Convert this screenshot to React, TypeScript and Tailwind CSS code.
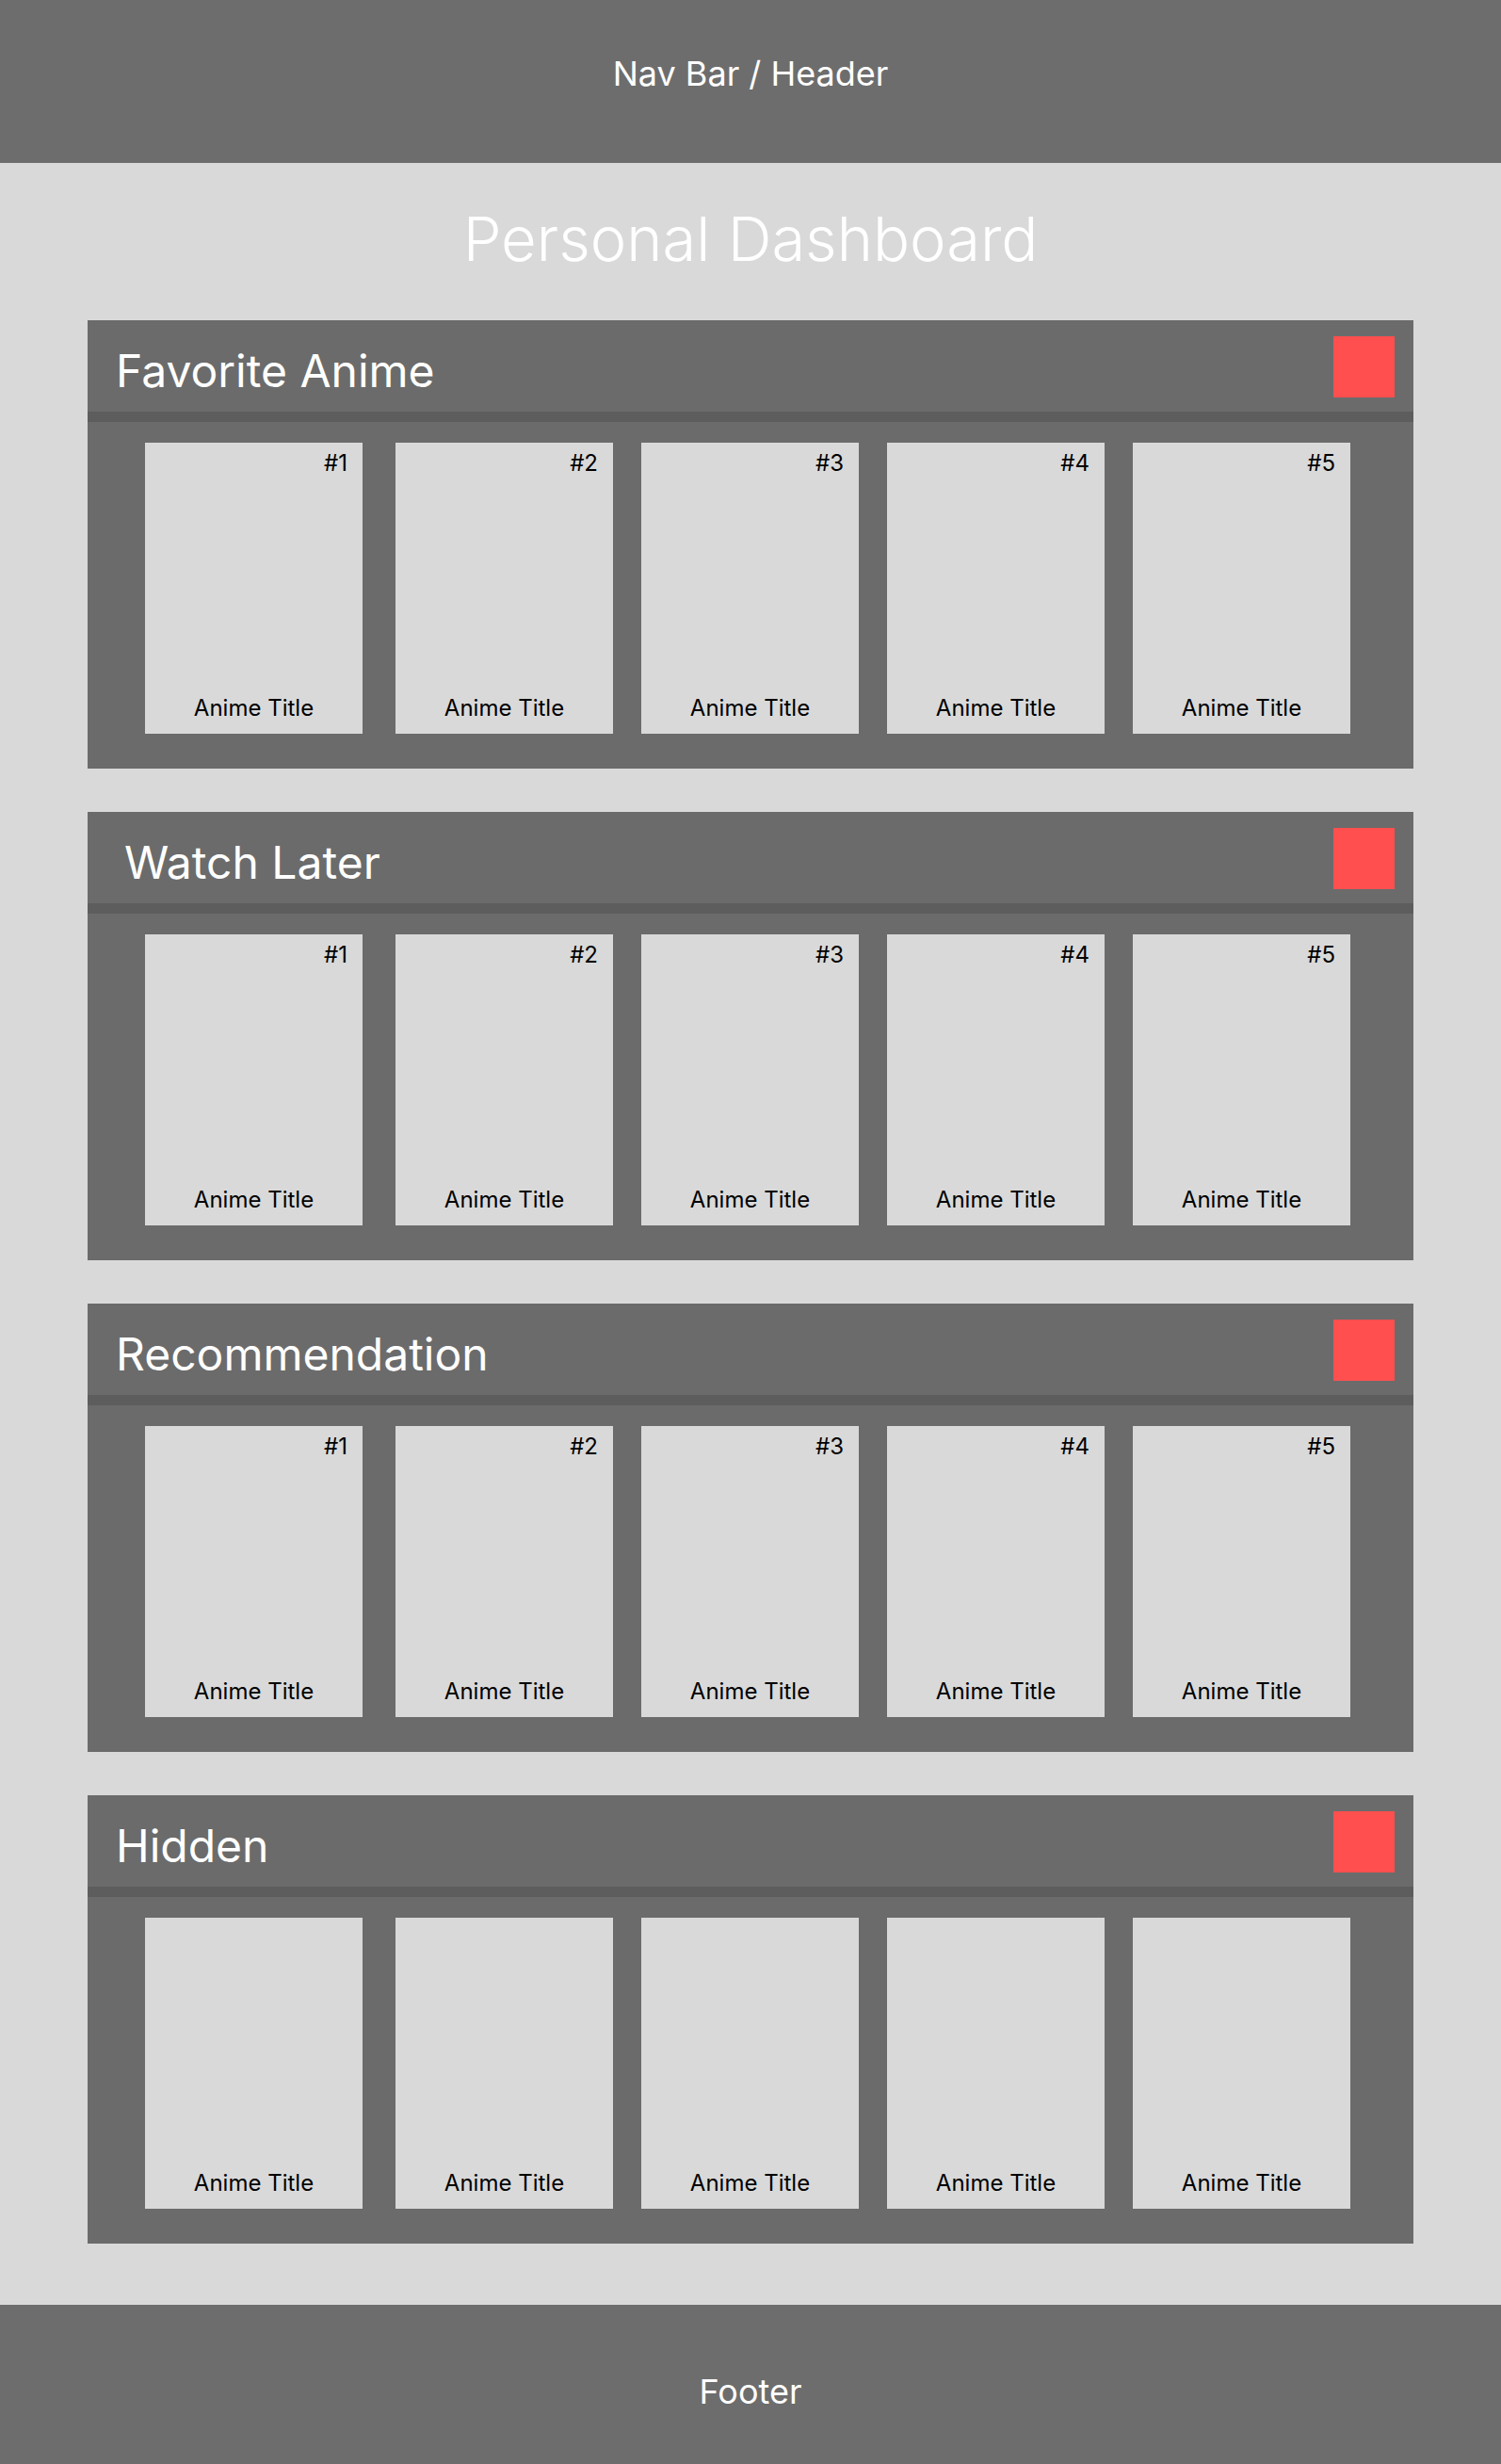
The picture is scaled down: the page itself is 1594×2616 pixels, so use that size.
import React from 'react';

const sections = [
  { title: 'Favorite Anime', ranked: true, indent: 'pl-[30px]' },
  { title: 'Watch Later', ranked: true, indent: 'pl-[39px]' },
  { title: 'Recommendation', ranked: true, indent: 'pl-[30px]' },
  { title: 'Hidden', ranked: false, indent: 'pl-[30px]' },
];

function AnimeCard({ rank, first }: { rank?: number; first?: boolean }) {
  return (
    <div
      className={`w-[231px] h-[309px] bg-[#d9d9d9] flex flex-col justify-between text-black text-[24px] leading-6 ${
        first ? 'mr-[5px]' : ''
      }`}
    >
      <div className="pt-[10px] pr-4 text-right h-[34px]">{rank ? `#${rank}` : ''}</div>
      <div className="pb-[15px] text-center">Anime Title</div>
    </div>
  );
}

function Section({ title, ranked, indent }: { title: string; ranked: boolean; indent: string }) {
  return (
    <section className="bg-[#6b6b6b] w-[1408px] mx-auto">
      <div className={`h-[97px] flex justify-between items-start ${indent} pr-5`}>
        <h2 className="pt-[30px] text-[48px] leading-[48px] text-white">{title}</h2>
        <button className="mt-[17px] w-[65px] h-[65px] bg-[#ff4f4f]" aria-label="edit" />
      </div>
      <div className="h-[11px] bg-[#5d5d5d]" />
      <div className="flex gap-[30px] pl-[61px] pt-[22px] pb-[37px]">
        {[1, 2, 3, 4, 5].map((n) => (
          <AnimeCard key={n} rank={ranked ? n : undefined} first={n === 1} />
        ))}
      </div>
    </section>
  );
}

export default function App() {
  return (
    <div className="min-h-[2616px] bg-[#d9d9d9] flex flex-col font-['Inter',sans-serif]">
      <header className="h-[173px] bg-[#6d6d6d] pt-[60px] text-center text-white text-[36px] leading-9">
        Nav Bar / Header
      </header>

      <main className="flex-1 pb-[65px]">
        <h1 className="mt-[49px] mb-[54px] text-center text-white text-[65px] leading-[64px] font-light">
          Personal Dashboard
        </h1>
        <div className="flex flex-col gap-[46px]">
          {sections.map((s) => (
            <Section key={s.title} {...s} />
          ))}
        </div>
      </main>

      <footer className="h-[170px] bg-[#6d6d6d] pt-[74px] text-center text-white text-[36px] leading-9">
        Footer
      </footer>
    </div>
  );
}
